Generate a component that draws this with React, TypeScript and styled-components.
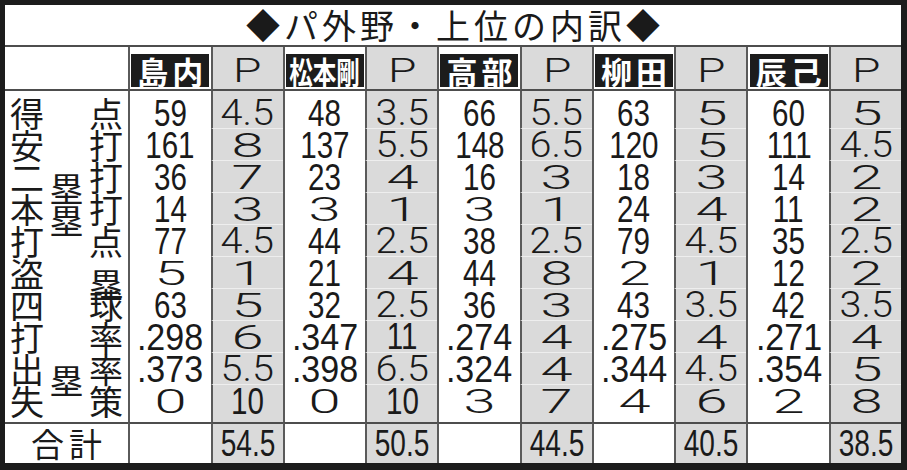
import { Fragment } from "react"
import styled, { createGlobalStyle, css } from "styled-components"

const GlobalStyle = createGlobalStyle`
  *, *::before, *::after { box-sizing: border-box; }
  body { margin: 0; background: #fff; }
`

type Kind = "wide" | "half" | "narrow" | "rate" | "total"
type Pos = "head" | "first" | "mid" | "last" | "total"

const players = ["島内", "松本剛", "高部", "柳田", "辰己"]

const rows: [string, string[]][] = [
    ["得点", ["59", "4.5", "48", "3.5", "66", "5.5", "63", "5", "60", "5"]],
    ["安打", ["161", "8", "137", "5.5", "148", "6.5", "120", "5", "111", "4.5"]],
    ["二塁打", ["36", "7", "23", "4", "16", "3", "18", "3", "14", "2"]],
    ["本塁打", ["14", "3", "3", "1", "3", "1", "24", "4", "11", "2"]],
    ["打点", ["77", "4.5", "44", "2.5", "38", "2.5", "79", "4.5", "35", "2.5"]],
    ["盗塁", ["5", "1", "21", "4", "44", "8", "2", "1", "12", "2"]],
    ["四球", ["63", "5", "32", "2.5", "36", "3", "43", "3.5", "42", "3.5"]],
    ["打率", [".298", "6", ".347", "11", ".274", "4", ".275", "4", ".271", "4"]],
    ["出塁率", [".373", "5.5", ".398", "6.5", ".324", "4", ".344", "4.5", ".354", "5"]],
    ["失策", ["0", "10", "0", "10", "3", "7", "4", "6", "2", "8"]],
]

const totals = ["54.5", "50.5", "44.5", "40.5", "38.5"]

const kindOf = (v: string): Kind =>
    v.startsWith(".") ? "rate" : v.includes(".") ? "half" : v.length === 1 ? "wide" : "narrow"

const Frame = styled.div`
    width: 907px;
    height: 470px;
    border: 5px solid #1c1c1c;
    border-right-width: 6px;
    border-bottom-width: 7px;
    background: #fff;
    display: flex;
    flex-direction: column;
    font-family: "Noto Sans CJK JP", "Noto Sans CJK SC", sans-serif;
    color: #1a1a1a;
`

const Title = styled.h1`
    margin: 0;
    height: 42px;
    flex-shrink: 0;
    border-bottom: 2px solid #4d4d4d;
    display: flex;
    align-items: center;
    justify-content: center;
    padding-left: 4px;
    font-size: 34px;
    font-weight: 400;
    letter-spacing: 4px;
    line-height: 1;
`

const Table = styled.div`
    flex: 1;
    display: grid;
    grid-template-columns: 123px repeat(5, 88fr 66fr);
    grid-template-rows: 44px 38px repeat(8, 32px) 37px 1fr;
`

const Cell = styled.div<{ $shade?: boolean; $pos: Pos; $edge?: boolean }>`
    display: flex;
    align-items: center;
    justify-content: center;
    background: ${p => (p.$shade ? "#dadada" : "#fff")};
    border-left: ${p => (p.$edge ? "none" : "2px solid #5a5a5a")};
    ${p => p.$pos === "head" && "border-bottom: 2px solid #4d4d4d;"}
    ${p => p.$pos === "total" && "border-top: 2px solid #4d4d4d;"}
    ${p => p.$pos === "first" && "padding-top: 6px;"}
    ${p => p.$pos === "last" && "padding-bottom: 5px;"}
    ${p => p.$shade && (p.$pos === "first" || p.$pos === "mid") && "border-bottom: 1px solid #eeeeee;"}
`

const LabelCell = styled(Cell)`
    position: relative;
    z-index: 1;
    background: transparent;
    justify-content: space-between;
    padding-left: 5px;
    padding-right: 5px;
    font-size: 34px;
    line-height: 32px;
`

const LabelChar = styled.span<{ $lift?: boolean }>`
    display: inline-block;
    height: 32px;
    ${p => p.$lift && "transform: translateY(11px);"}
`

const TotalLabel = styled(Cell)`
    font-size: 33px;
    line-height: 1;
    letter-spacing: 5px;
    padding-left: 5px;
`

const NameBox = styled.div`
    width: 78px;
    height: 33px;
    margin-top: 4px;
    background: #1c1c1c;
    color: #fff;
    display: flex;
    align-items: center;
    justify-content: center;
    font-size: 31px;
    font-weight: 700;
    line-height: 1;
`

const NameText = styled.span<{ $long: boolean }>`
    display: inline-block;
    white-space: nowrap;
    ${p =>
        p.$long
            ? "transform: scaleX(0.76);"
            : "letter-spacing: 4px; padding-left: 4px;"}
`

const PMark = styled.span`
    display: inline-block;
    margin-top: 4px;
    font-family: Roboto, "Liberation Sans", sans-serif;
    font-weight: 300;
    font-size: 33px;
    line-height: 1;
    transform: scaleX(1.4);
`

const kindStyles: Record<Kind, ReturnType<typeof css>> = {
    wide: css`
        font-family: Roboto, "Liberation Sans", sans-serif;
        font-weight: 300;
        font-size: 34px;
        transform: scaleX(1.7);
    `,
    half: css`
        font-family: Roboto, "Liberation Sans", sans-serif;
        font-weight: 300;
        font-size: 36px;
        transform: scaleX(1.1);
    `,
    narrow: css`
        font-family: "Liberation Sans", Arial, sans-serif;
        font-size: 37px;
        transform: scaleX(0.8);
    `,
    rate: css`
        font-family: "Liberation Sans", Arial, sans-serif;
        font-size: 37px;
        transform: scaleX(0.92);
    `,
    total: css`
        font-family: "Liberation Sans", Arial, sans-serif;
        font-size: 36px;
        transform: scaleX(0.78);
    `,
}

const Num = styled.span<{ $kind: Kind }>`
    display: inline-block;
    white-space: nowrap;
    line-height: 1;
    ${p => kindStyles[p.$kind]}
`

const posOf = (i: number): Pos => (i === 0 ? "first" : i === rows.length - 1 ? "last" : "mid")

const App = () => {
    return (
        <>
            <GlobalStyle />
            <Frame>
                <Title>◆パ外野・上位の内訳◆</Title>
                <Table>
                    <Cell $pos="head" $edge />
                    {players.map(name => (
                        <Fragment key={name}>
                            <Cell $pos="head">
                                <NameBox>
                                    <NameText $long={name.length > 2}>{name}</NameText>
                                </NameBox>
                            </Cell>
                            <Cell $pos="head" $shade>
                                <PMark>P</PMark>
                            </Cell>
                        </Fragment>
                    ))}

                    {rows.map(([label, values], i) => (
                        <Fragment key={label}>
                            <LabelCell $pos={posOf(i)} $edge>
                                {label.split("").map((ch, k) => (
                                    <LabelChar key={k} $lift={ch === "塁"}>
                                        {ch}
                                    </LabelChar>
                                ))}
                            </LabelCell>
                            {values.map((v, j) => (
                                <Cell key={j} $pos={posOf(i)} $shade={j % 2 === 1}>
                                    <Num $kind={kindOf(v)}>{v}</Num>
                                </Cell>
                            ))}
                        </Fragment>
                    ))}

                    <TotalLabel $pos="total" $edge>合計</TotalLabel>
                    {totals.map(t => (
                        <Fragment key={t}>
                            <Cell $pos="total" />
                            <Cell $pos="total" $shade>
                                <Num $kind="total">{t}</Num>
                            </Cell>
                        </Fragment>
                    ))}
                </Table>
            </Frame>
        </>
    )
}

export default App
